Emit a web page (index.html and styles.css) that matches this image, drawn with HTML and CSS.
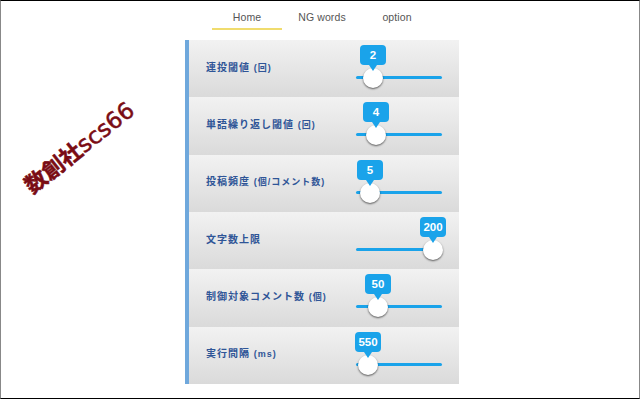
FILE: index.html
```html
<!DOCTYPE html>
<html lang="ja">
<head>
    <meta charset="UTF-8">
    <meta name="viewport" content="width=device-width, initial-scale=1.0">
    <title>Settings</title>
    <link rel="stylesheet" href="styles.css">
</head>
<body>

<div class="frame">
    <div class="watermark"><b>数創社</b>scs66</div>

    <!-- Tabs -->
    <nav class="tabs">
        <a class="tab active">Home</a>
        <a class="tab">NG words</a>
        <a class="tab">option</a>
    </nav>

    <!-- Slider rows -->
    <div class="panel">
        <div class="row">
            <div class="label">連投閾値 <small>(回)</small></div>
            <div class="slider"><div class="knob" style="left: 17px"><span class="bubble">2</span></div></div>
        </div>
        <div class="row">
            <div class="label">単語繰り返し閾値 <small>(回)</small></div>
            <div class="slider"><div class="knob" style="left: 20px"><span class="bubble">4</span></div></div>
        </div>
        <div class="row">
            <div class="label">投稿頻度 <small>(個/コメント数)</small></div>
            <div class="slider"><div class="knob" style="left: 14px"><span class="bubble">5</span></div></div>
        </div>
        <div class="row">
            <div class="label">文字数上限</div>
            <div class="slider"><div class="knob" style="left: 77px"><span class="bubble">200</span></div></div>
        </div>
        <div class="row">
            <div class="label">制御対象コメント数 <small>(個)</small></div>
            <div class="slider"><div class="knob" style="left: 22px"><span class="bubble">50</span></div></div>
        </div>
        <div class="row">
            <div class="label">実行間隔 <small>(ms)</small></div>
            <div class="slider"><div class="knob" style="left: 12px"><span class="bubble">550</span></div></div>
        </div>
    </div>
</div>

</body>
</html>
```

FILE: styles.css
```css
* {
    box-sizing: border-box;
}
html, body {
    margin: 0;
    padding: 0;
}
body {
    width: 640px;
    height: 400px;
    overflow: hidden;
    background: #ffffff;
    font-family: 'Liberation Sans', 'Noto Sans CJK JP', sans-serif;
}
.frame {
    position: relative;
    width: 640px;
    height: 399px;
    padding-top: 1px;
    border-top: 1px solid #000000;
    border-bottom: 1px solid #000000;
    border-left: 1px solid #888888;
    border-right: 1px solid #888888;
    display: flex;
    flex-direction: column;
    align-items: center;
}
.watermark {
    position: absolute;
    left: -1px;
    top: 129px;
    width: 156px;
    text-align: center;
    white-space: nowrap;
    color: #7a0c14;
    font-family: 'DejaVu Sans', 'Noto Sans CJK JP', sans-serif;
    font-size: 23px;
    -webkit-text-stroke: 0.5px #7a0c14;
    transform: rotate(-38deg);
}
.watermark b {
    font-family: 'Noto Sans CJK JP', sans-serif;
    font-size: 22px;
}
.tabs {
    display: flex;
    gap: 5px;
    margin-left: 4px;
    color: #555555;
    font-size: 10.5px;
    letter-spacing: 0.1px;
}
.tab {
    width: 70px;
    height: 28px;
    padding-top: 9px;
    text-align: center;
}
.tab.active {
    border-bottom: 2px solid #f0dc6e;
}
.panel {
    width: 274px;
    margin-top: 10px;
    margin-left: 4px;
    border-left: 4px solid #6fa8dc;
}
.row {
    height: 57.33px;
    padding-left: 17px;
    display: flex;
    align-items: center;
    justify-content: space-between;
    background: linear-gradient(#f2f2f2, #dadada);
}
.label {
    color: #2f5597;
    font-size: 10px;
    font-weight: bold;
    letter-spacing: 1px;
    margin-top: -5px;
}
.label small {
    font-size: 9px;
}
.slider {
    position: relative;
    width: 86px;
    height: 3px;
    margin-top: 18px;
    margin-right: 17px;
    border-radius: 2px;
    background: #1aa3ea;
}
.knob {
    position: absolute;
    top: -8px;
    width: 20px;
    height: 20px;
    margin-left: -10px;
    border-radius: 50%;
    background: #ffffff;
    box-shadow: 0 1px 2px rgba(0,0,0,0.6);
}
.bubble {
    position: absolute;
    left: 50%;
    bottom: 23px;
    min-width: 26px;
    height: 20px;
    line-height: 20px;
    transform: translateX(-50%);
    border-radius: 4px;
    background: #1aa3ea;
    color: #ffffff;
    font-size: 11.5px;
    font-weight: bold;
    text-align: center;
}
.bubble::after {
    content: "";
    position: absolute;
    left: 50%;
    top: 100%;
    margin-left: -4px;
    border: 4px solid transparent;
    border-top: 6px solid #1aa3ea;
    border-bottom: 0;
}
```
